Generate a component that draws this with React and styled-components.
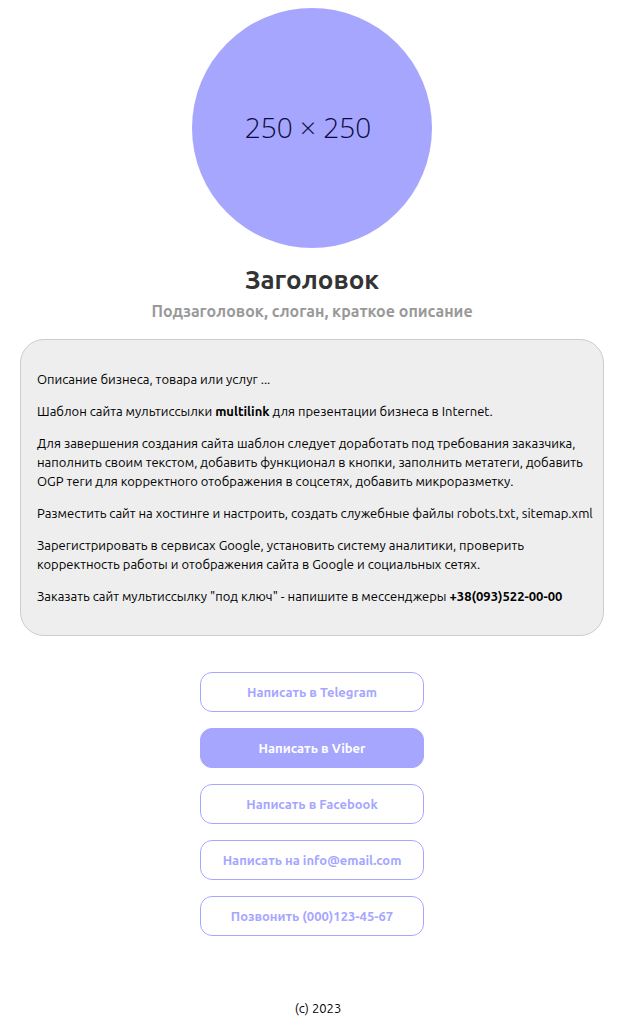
import React from 'react';
import styled, { createGlobalStyle } from 'styled-components';

const GlobalStyle = createGlobalStyle`
  *, *::before, *::after { box-sizing: border-box; }
  body {
    margin: 0;
    background: #fff;
    color: #000;
    font-family: Ubuntu, "Open Sans", "Noto Sans", sans-serif;
    font-size: 13px;
    line-height: 19px;
  }
`;

const Page = styled.div`
  display: flex;
  flex-direction: column;
  align-items: center;
  padding: 8px 18px 14px 20px;
`;

const Avatar = styled.div`
  display: flex;
  align-items: center;
  justify-content: center;
  width: 240px;
  height: 240px;
  padding: 0 8px 2px 0;
  border-radius: 50%;
  background: #a6a6ff;
  color: #0b0b3e;
  font-family: "Open Sans", "Noto Sans", sans-serif;
  font-weight: 300;
  font-size: 28px;
`;

const Title = styled.h1`
  margin: 16px 0 0;
  color: #333;
  font-size: 26px;
  font-weight: 600;
  line-height: 32px;
`;

const Subtitle = styled.h2`
  margin: 4px 0 0;
  color: #999;
  font-size: 16px;
  font-weight: 600;
  line-height: 22px;
  text-align: center;
`;

const Card = styled.section`
  display: flex;
  flex-direction: column;
  gap: 13px;
  width: 100%;
  max-width: 800px;
  margin-top: 17px;
  padding: 30px 8px 29px 16px;
  border: 1px solid #ccc;
  border-radius: 24px;
  background: #eee;
`;

const Text = styled.p`
  margin: 0;
`;

const Links = styled.nav`
  display: flex;
  flex-direction: column;
  gap: 16px;
  width: 224px;
  margin-top: 36px;
`;

const ActionButton = styled.button`
  height: 40px;
  padding: 0;
  border: 1px solid #a6a6ff;
  border-radius: 12px;
  background: ${({ $filled }) => ($filled ? '#a6a6ff' : '#fff')};
  color: ${({ $filled }) => ($filled ? '#fff' : '#a6a6ff')};
  font: inherit;
  font-weight: 600;
  cursor: pointer;
`;

const Footer = styled.footer`
  margin-top: 63px;
  padding-left: 12px;
`;

const actions = [
  { label: 'Написать в Telegram' },
  { label: 'Написать в Viber', filled: true },
  { label: 'Написать в Facebook' },
  { label: 'Написать на info@email.com' },
  { label: 'Позвонить (000)123-45-67' },
];

export default function App() {
  return (
    <>
      <GlobalStyle />
      <Page>
        <Avatar>250 × 250</Avatar>
        <Title>Заголовок</Title>
        <Subtitle>Подзаголовок, слоган, краткое описание</Subtitle>
        <Card>
          <Text>Описание бизнеса, товара или услуг ...</Text>
          <Text>Шаблон сайта мультиссылки <b>multilink</b> для презентации бизнеса в Internet.</Text>
          <Text>Для завершения создания сайта шаблон следует доработать под требования заказчика, наполнить своим текстом, добавить функционал в кнопки, заполнить метатеги, добавить OGP теги для корректного отображения в соцсетях, добавить микроразметку.</Text>
          <Text>Разместить сайт на хостинге и настроить, создать служебные файлы robots.txt, sitemap.xml</Text>
          <Text>Зарегистрировать в сервисах Google, установить систему аналитики, проверить корректность работы и отображения сайта в Google и социальных сетях.</Text>
          <Text>Заказать сайт мультиссылку "под ключ" - напишите в мессенджеры <b>+38(093)522-00-00</b></Text>
        </Card>
        <Links>
          {actions.map(({ label, filled }) => (
            <ActionButton key={label} type="button" $filled={filled}>{label}</ActionButton>
          ))}
        </Links>
        <Footer>(c) 2023</Footer>
      </Page>
    </>
  );
}
